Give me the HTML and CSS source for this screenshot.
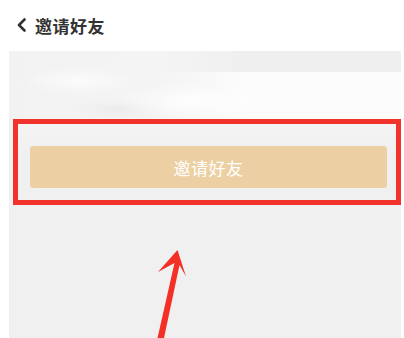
FILE: index.html
```html
<!DOCTYPE html>
<html lang="zh">
<head>
<meta charset="utf-8">
<link rel="stylesheet" href="styles.css">
</head>
<body>
<header class="nav">
  <svg class="back" width="11" height="14" viewBox="0 0 11 14"><path d="M8.5 1.5 L3 7 L8.5 12.5" fill="none" stroke="#333" stroke-width="2.6" stroke-linecap="round" stroke-linejoin="round"/></svg>
  <span class="title">邀请好友</span>
</header>
<main class="panel">
  <div class="banner"></div>
  <div class="highlight">
    <button class="invite">邀请好友</button>
  </div>
</main>
<svg class="pointer" width="404" height="338" viewBox="0 0 404 338"><path d="M157.5 338 L174.5 263 L158 272 L177.5 250 L186 276.5 L179.5 265 L164 338 Z" fill="#f42f25"/></svg>
</body>
</html>
```
FILE: styles.css
```css
html, body {
  margin: 0;
  padding: 0;
  background: #ffffff;
  height: 338px;
  overflow: hidden;
  font-family: "Noto Sans CJK SC", "Noto Sans", sans-serif;
}
.nav {
  height: 51px;
  display: flex;
  align-items: center;
  padding-left: 16px;
  gap: 8px;
  box-sizing: border-box;
  padding-bottom: 1px;
}
.back { display: block; }
.title {
  font-size: 17px;
  font-weight: bold;
  color: #333333;
  letter-spacing: 0.5px;
}
.panel {
  margin: 0 3px 0 9px;
  height: 287px;
  background: #f0f0f0;
}
.banner {
  height: 68px;
  background:
    radial-gradient(ellipse 60px 14px at 70px 30px, rgba(255,255,255,0.7), rgba(255,255,255,0)),
    radial-gradient(ellipse 80px 18px at 180px 50px, rgba(255,255,255,0.8), rgba(255,255,255,0)),
    radial-gradient(ellipse 50px 10px at 110px 58px, rgba(232,232,232,0.7), rgba(232,232,232,0)),
    linear-gradient(to right, #f2f2f2 0, #f4f4f4 150px, rgba(250,250,250,0) 240px),
    linear-gradient(to bottom, #efefef 0, #efefef 21px, #fcfcfc 21px, #fcfcfc 68px);
}
.highlight {
  margin-left: 4px;
  border: 5.5px solid #f2332b;
  padding: 22px 9px 12px 12px;
  background: linear-gradient(to bottom, #f4f4f4, #f0f0f0 30px);
}
.invite {
  display: block;
  width: 100%;
  height: 42px;
  border: none;
  border-radius: 3px;
  background: #ecd0a3;
  color: #ffffff;
  font-family: "Noto Sans CJK SC", "Noto Sans", sans-serif;
  font-size: 17px;
  letter-spacing: 0.5px;
  padding: 0;
}
.pointer {
  position: absolute;
  left: 0;
  top: 0;
  pointer-events: none;
}
```
